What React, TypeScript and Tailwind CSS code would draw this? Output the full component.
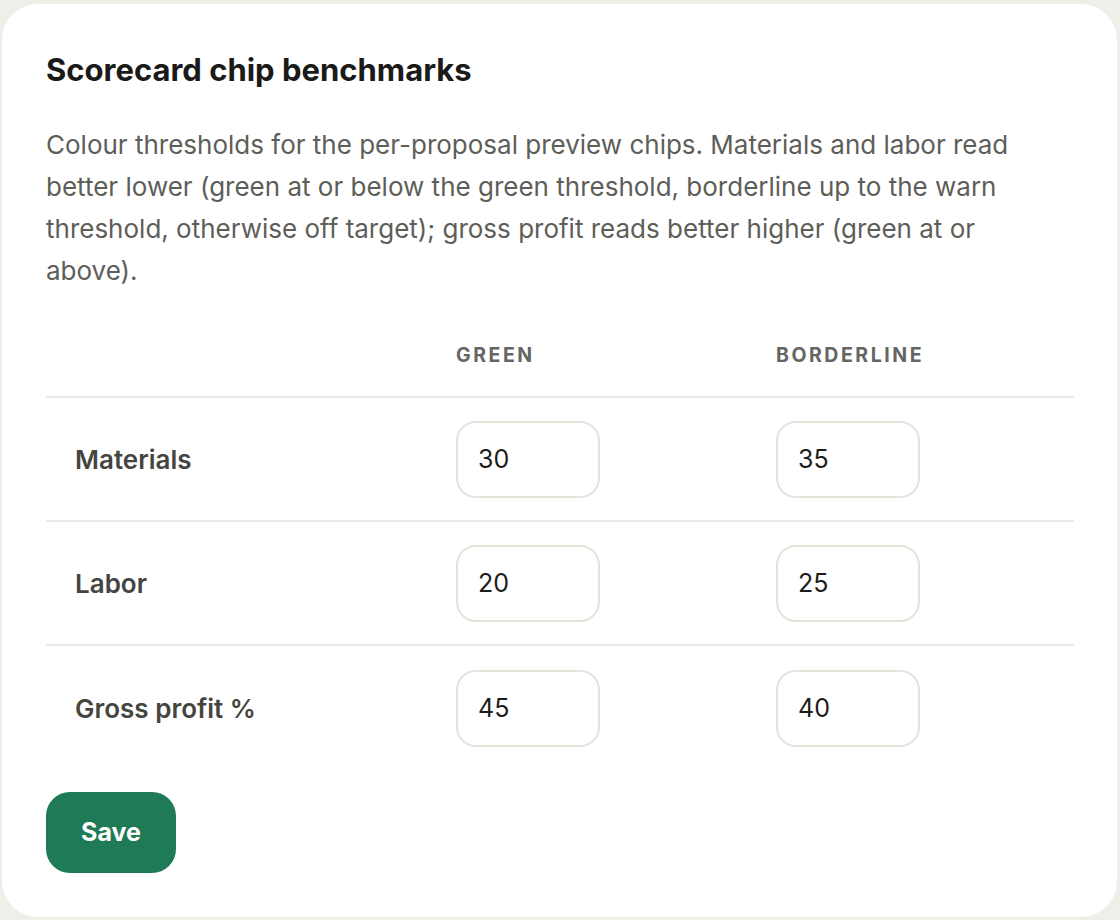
import { useState } from "react";

type Row = { key: string; label: string; green: string; warn: string };

const initialRows: Row[] = [
  { key: "materials", label: "Materials", green: "30", warn: "35" },
  { key: "labor", label: "Labor", green: "20", warn: "25" },
  { key: "gp", label: "Gross profit %", green: "45", warn: "40" },
];

function ThresholdInput({ value, onChange }: { value: string; onChange: (v: string) => void }) {
  return (
    <input
      type="text"
      inputMode="numeric"
      value={value}
      onChange={(e) => onChange(e.target.value)}
      className="h-[77px] w-[144px] rounded-[20px] border-2 border-[#e6e4da] bg-white px-[20px] text-[25px] text-[#1c1c1a] outline-none"
    />
  );
}

export default function App() {
  const [rows, setRows] = useState<Row[]>(initialRows);

  const update = (i: number, patch: Partial<Row>) =>
    setRows((prev) => prev.map((r, idx) => (idx === i ? { ...r, ...patch } : r)));

  return (
    <div className="min-h-[920px] bg-[#efefea] pl-[2px] pr-[3px] pt-[4px] pb-[3px] font-['Inter',sans-serif]">
      <div className="h-[913px] rounded-[36px] bg-white px-[44px] pt-[48px]">
        <h2 className="text-[31px] leading-[36px] font-bold text-[#1a1a18]">Scorecard chip benchmarks</h2>
        <p className="mt-[36px] text-[26px] leading-[42px] text-[#5e5e58]">
          Colour thresholds for the per-proposal preview chips. Materials and labor read better lower (green at
          or below the green threshold, borderline up to the warn threshold, otherwise off target); gross profit
          reads better higher (green at or above).
        </p>

        <div className="mt-[20px] w-[1028px]">
          <div className="grid h-[86px] grid-cols-[410px_320px_1fr] items-center border-b-2 border-[#ebebe6] pt-[4px]">
            <span />
            <span className="text-[19.5px] font-bold tracking-[0.13em] text-[#656561]">GREEN</span>
            <span className="text-[19.5px] font-bold tracking-[0.13em] text-[#656561]">BORDERLINE</span>
          </div>
          {rows.map((row, i) => (
            <div
              key={row.key}
              className={
                i < rows.length - 1
                  ? "grid h-[124px] grid-cols-[410px_320px_1fr] items-center border-b-2 border-[#ebebe6]"
                  : "grid h-[124px] grid-cols-[410px_320px_1fr] items-center"
              }
            >
              <span className="pl-[29px] text-[26px] font-semibold text-[#45453f]">{row.label}</span>
              <ThresholdInput value={row.green} onChange={(v) => update(i, { green: v })} />
              <ThresholdInput value={row.warn} onChange={(v) => update(i, { warn: v })} />
            </div>
          ))}
        </div>

        <button
          type="button"
          className="mt-[22px] h-[81px] w-[130px] rounded-[24px] bg-[#1f7a56] text-[25px] font-bold text-white"
        >
          Save
        </button>
      </div>
    </div>
  );
}
